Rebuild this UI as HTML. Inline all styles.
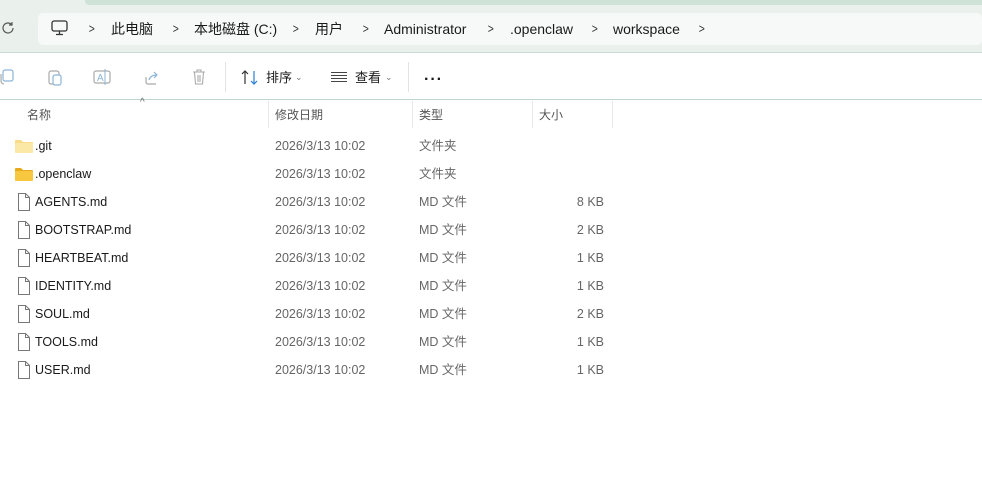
<!DOCTYPE html>
<html><head><meta charset="utf-8"><style>
*{margin:0;padding:0;box-sizing:border-box}
body{width:982px;height:494px;background:#fff;font-family:"Liberation Sans","Noto Sans CJK SC",sans-serif;font-size:13px;color:#1a1a1a;position:relative;overflow:hidden}
.top{position:absolute;left:0;top:0;width:982px;height:53px;background:#eaf1ed;border-bottom:1px solid #c9dcd3}
.strip{position:absolute;left:85px;top:0;width:897px;height:5px;background:#cfe2d8;border-radius:0 0 0 4px}
.addr{position:absolute;left:38px;top:13px;width:944px;height:32px;background:#f7f9f8;border-radius:5px}
.t{position:absolute;white-space:nowrap;line-height:16px}
.chev{position:absolute;color:#333;font-size:13px;line-height:16px;transform:scaleX(.8)}
.tb{position:absolute;top:54px;left:0;width:982px;height:46px;border-bottom:1px solid #bcd6ca}
.sep{position:absolute;width:1px;background:#e3e3e3}
.hdr{color:#555;font-size:12px}
.row{position:absolute;left:0;height:28px;width:982px;font-size:12.5px}
.row .t{top:5px}
.g{color:#666}
</style></head><body>
<div class="top"><div class="strip"></div><div class="addr"></div></div>
<svg class="t" style="left:1px;top:21px" width="14" height="14" viewBox="0 0 14 14"><path d="M12 7a5 5 0 1 1-1.5-3.6M11 1v3H8" fill="none" stroke="#555" stroke-width="1.2"/></svg>
<svg class="t" style="left:51px;top:20px" width="17" height="16" viewBox="0 0 17 16"><rect x="1" y="1" width="15" height="10" rx="2" fill="none" stroke="#333" stroke-width="1.3"/><path d="M8.5 11v3M5 14.5h7" stroke="#333" stroke-width="1.3"/></svg>
<span class="chev" style="left:88px;top:21px">&gt;</span>
<span class="t" style="left:111px;top:21px;font-size:14px">此电脑</span>
<span class="chev" style="left:172px;top:21px">&gt;</span>
<span class="t" style="left:194px;top:21px;font-size:14px">本地磁盘 (C:)</span>
<span class="chev" style="left:292px;top:21px">&gt;</span>
<span class="t" style="left:315px;top:21px;font-size:14px">用户</span>
<span class="chev" style="left:362px;top:21px">&gt;</span>
<span class="t" style="left:384px;top:21px;font-size:14px">Administrator</span>
<span class="chev" style="left:487px;top:21px">&gt;</span>
<span class="t" style="left:510px;top:21px;font-size:14px">.openclaw</span>
<span class="chev" style="left:591px;top:21px">&gt;</span>
<span class="t" style="left:613px;top:21px;font-size:14px">workspace</span>
<span class="chev" style="left:698px;top:21px">&gt;</span>
<div class="tb"></div>
<svg class="t" style="left:0;top:69px" width="14" height="16"><rect x="3" y="1" width="10" height="11" rx="2" fill="none" stroke="#8cb4d8" stroke-width="1.2"/><path d="M1 5v7a3 3 0 0 0 3 3" fill="none" stroke="#aaa" stroke-width="1.2"/></svg>
<svg class="t" style="left:47px;top:68px" width="16" height="18"><rect x="2" y="3" width="10" height="13" rx="2" fill="none" stroke="#aaa" stroke-width="1.2"/><rect x="6" y="7" width="8" height="10" rx="2" fill="#fff" stroke="#8cb4d8" stroke-width="1.2"/></svg>
<svg class="t" style="left:93px;top:69px" width="18" height="16"><rect x="1" y="2" width="16" height="12" rx="2" fill="none" stroke="#aaa" stroke-width="1.2"/><text x="4" y="12" font-size="10" fill="#8cb4d8" font-family="Liberation Sans">A</text><path d="M12 0v16" stroke="#8cb4d8"/></svg>
<svg class="t" style="left:143px;top:69px" width="17" height="16"><path d="M3 8v5a2 2 0 0 0 2 2h8" fill="none" stroke="#aaa" stroke-width="1.2"/><path d="M6 11c1-4 4-5 8-5M11 3l3 3-3 3" fill="none" stroke="#8cb4d8" stroke-width="1.2"/></svg>
<svg class="t" style="left:191px;top:69px" width="16" height="17"><path d="M2 3h12M6 3V1h4v2M3.5 3l1 12h7l1-12M7 6v7M9 6v7" fill="none" stroke="#aaa" stroke-width="1.1"/></svg>
<div class="sep" style="left:225px;top:62px;height:30px"></div>
<svg class="t" style="left:241px;top:70px" width="18" height="15"><path d="M4 14V1M1 4l3-3 3 3" fill="none" stroke="#333" stroke-width="1.2"/><path d="M13 1v13M10 11l3 3 3-3" fill="none" stroke="#2a7fd4" stroke-width="1.2"/></svg>
<span class="t" style="left:266px;top:70px">排序</span><span class="t" style="left:295px;top:69px;font-size:9px;color:#777">⌄</span>
<svg class="t" style="left:331px;top:72px" width="16" height="10"><path d="M0 .5h16M0 3.5h16M0 6.5h16M0 9.5h16" stroke="#444" stroke-width="1"/></svg>
<span class="t" style="left:355px;top:70px">查看</span><span class="t" style="left:385px;top:69px;font-size:9px;color:#777">⌄</span>
<div class="sep" style="left:408px;top:62px;height:30px"></div>
<span class="t" style="left:424px;top:72px;font-size:16px;font-weight:bold;letter-spacing:1px">···</span>
<span class="t" style="left:140px;top:95px;font-size:10px;color:#666">^</span>
<div class="sep" style="left:268px;top:101px;height:27px;background:#e8e8e8"></div>
<div class="sep" style="left:412px;top:101px;height:27px;background:#e8e8e8"></div>
<div class="sep" style="left:532px;top:101px;height:27px;background:#e8e8e8"></div>
<div class="sep" style="left:612px;top:101px;height:27px;background:#e8e8e8"></div>
<span class="t hdr" style="left:27px;top:107px">名称</span>
<span class="t hdr" style="left:275px;top:107px">修改日期</span>
<span class="t hdr" style="left:419px;top:107px">类型</span>
<span class="t hdr" style="left:539px;top:107px">大小</span>

<div class="row" style="top:133px"><svg class="t" style="left:15px;top:6px" width="18" height="14"><path d="M0 2a1 1 0 0 1 1-1h5l2 2h9a1 1 0 0 1 1 1v9H0z" fill="#f8dc8a"/><rect x="0" y="4" width="18" height="10" rx="1" fill="#fbe7a6"/></svg><span class="t" style="left:35px">.git</span><span class="t g" style="left:275px">2026/3/13 10:02</span><span class="t g" style="left:419px">文件夹</span></div>
<div class="row" style="top:161px"><svg class="t" style="left:15px;top:6px" width="18" height="14"><path d="M0 2a1 1 0 0 1 1-1h5l2 2h9a1 1 0 0 1 1 1v9H0z" fill="#e8a91c"/><rect x="0" y="4" width="18" height="10" rx="1" fill="#f7c740"/></svg><span class="t" style="left:35px">.openclaw</span><span class="t g" style="left:275px">2026/3/13 10:02</span><span class="t g" style="left:419px">文件夹</span></div>

<div id="files"></div>
<script>
var f=[["AGENTS.md","8 KB"],["BOOTSTRAP.md","2 KB"],["HEARTBEAT.md","1 KB"],["IDENTITY.md","1 KB"],["SOUL.md","2 KB"],["TOOLS.md","1 KB"],["USER.md","1 KB"]],h="";
f.forEach(function(x,i){var t=189+i*28;h+='<div class="row" style="top:'+t+'px"><svg class="t" style="left:17px;top:4px" width="14" height="18"><path d="M1.5 .5h7l4 4v13h-11z" fill="#fff" stroke="#777"/><path d="M8.5 .5v4h4" fill="none" stroke="#777"/></svg><span class="t" style="left:35px">'+x[0]+'</span><span class="t g" style="left:275px">2026/3/13 10:02</span><span class="t g" style="left:419px">MD 文件</span><span class="t g" style="right:378px">'+x[1]+'</span></div>';});
document.getElementById("files").innerHTML=h;
</script>
</body></html>
